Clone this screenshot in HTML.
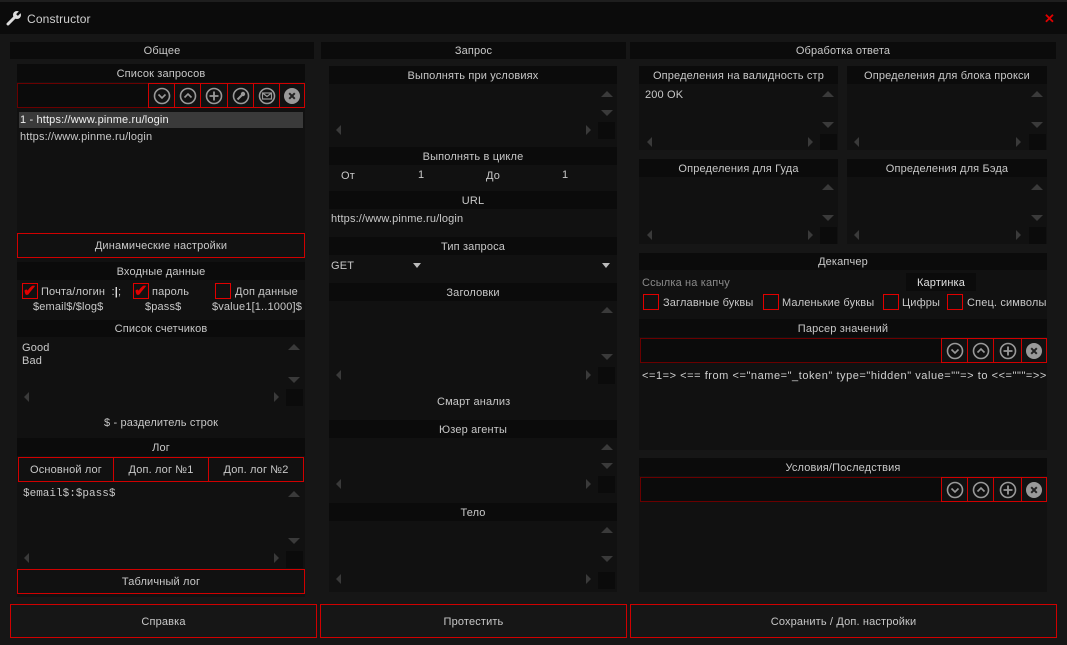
<!DOCTYPE html>
<html><head><meta charset="utf-8"><style>
*{margin:0;padding:0;box-sizing:border-box}
body{width:1067px;height:645px;background:#161616;font-family:"Liberation Sans",sans-serif;font-size:11px;letter-spacing:0.15px;color:#c8c8c8;position:relative;overflow:hidden}
div,span{position:absolute}
.h{background:#0b0b0b;text-align:center;height:18px;line-height:20px;color:#c8c8c8}
.p{background:#111}
.rb{border:1px solid #d00000;text-align:center;color:#c8c8c8}
.db{border:1px solid #6a0000}
.t{white-space:nowrap;margin-top:1px}
.cb{width:16px;height:16px;border:1px solid #e00000}
.corner{width:17px;height:17px;background:#0b0b0b}
.up{width:0;height:0;border-left:6px solid transparent;border-right:6px solid transparent;border-bottom:6px solid #3a3a3a}
.dn{width:0;height:0;border-left:6px solid transparent;border-right:6px solid transparent;border-top:6px solid #3a3a3a}
.lf{width:0;height:0;border-top:5px solid transparent;border-bottom:5px solid transparent;border-right:5px solid #3a3a3a}
.rt{width:0;height:0;border-top:5px solid transparent;border-bottom:5px solid transparent;border-left:5px solid #3a3a3a}
.btn{border:1px solid #d00000;height:25px}
.btn svg{position:absolute;left:50%;top:50%;margin:-9px 0 0 -9px}
</style></head><body>
<div style="left:0;top:0;width:1067px;height:34px;background:#0b0b0b"></div>
<div style="left:0;top:0;width:1067px;height:2px;background:#1e1e1e"></div>
<svg style="position:absolute;left:6px;top:10px" width="16" height="16" viewBox="0 0 16 16"><path d="M2 14 L9 7" stroke="#ddd" stroke-width="3" stroke-linecap="round"/><circle cx="11" cy="5" r="4" fill="#ddd"/><path d="M11 5 L15 1" stroke="#0b0b0b" stroke-width="2.5"/></svg>
<div class="t" style="left:27px;top:11px;font-size:12px;color:#d0d0d0">Constructor</div>
<div class="t" style="left:1044px;top:10px;color:#e00000;font-size:13px;font-weight:bold">✕</div>

<!-- LEFT -->
<div class="h" style="left:10px;top:42px;width:304px;height:17px;line-height:19px">Общее</div>
<div class="p" style="left:17px;top:64px;width:288px;height:533px"></div>
<div class="h" style="left:17px;top:64px;width:288px">Список запросов</div>
<div class="db" style="left:17px;top:83px;width:132px;height:25px;background:#0b0b0b"></div>
<div style="left:19px;top:112px;width:284px;height:16px;background:#3a3a3a"></div>
<div class="t" style="left:20px;top:113px;color:#f0f0f0">1 - https://www.pinme.ru/login</div>
<div class="t" style="left:20px;top:130px">https://www.pinme.ru/login</div>
<div class="rb" style="left:17px;top:233px;width:288px;height:25px;line-height:25px">Динамические настройки</div>
<div class="h" style="left:17px;top:262px;width:288px">Входные данные</div>
<div class="cb" style="left:22px;top:283px"></div><div class="t" style="left:23px;top:280px;color:#e00000;font-size:16px;font-weight:bold">✔</div>
<div class="t" style="left:41px;top:285px">Почта/логин &nbsp;:<b style="color:#ddd">|</b>;</div>
<div class="cb" style="left:133px;top:283px"></div><div class="t" style="left:134px;top:280px;color:#e00000;font-size:16px;font-weight:bold">✔</div>
<div class="t" style="left:152px;top:285px">пароль</div>
<div class="cb" style="left:215px;top:283px"></div>
<div class="t" style="left:235px;top:285px">Доп данные</div>
<div class="t" style="left:33px;top:300px">$email$/$log$</div>
<div class="t" style="left:145px;top:300px">$pass$</div>
<div class="t" style="left:212px;top:300px">$value1[1..1000]$</div>
<div class="h" style="left:17px;top:320px;width:288px;height:17px;line-height:19px">Список счетчиков</div>
<div class="t" style="left:22px;top:341px;line-height:13px">Good<br>Bad</div>
<div class="up" style="left:288px;top:344px"></div><div class="dn" style="left:288px;top:377px"></div>
<div class="lf" style="left:24px;top:392px"></div><div class="rt" style="left:274px;top:392px"></div>
<div class="corner" style="left:286px;top:389px"></div>
<div class="t" style="left:104px;top:416px">$ - разделитель строк</div>
<div class="h" style="left:17px;top:438px;width:288px">Лог</div>
<div class="rb" style="left:18px;top:457px;width:96px;height:25px;line-height:25px">Основной лог</div>
<div class="rb" style="left:113px;top:457px;width:96px;height:25px;line-height:25px">Доп. лог №1</div>
<div class="rb" style="left:208px;top:457px;width:96px;height:25px;line-height:25px">Доп. лог №2</div>
<div class="t" style="left:23px;top:487px;font-family:'Liberation Mono',monospace;font-size:11px;letter-spacing:0">$email$:$pass$</div>
<div class="up" style="left:288px;top:491px"></div><div class="dn" style="left:288px;top:538px"></div>
<div class="lf" style="left:24px;top:553px"></div><div class="rt" style="left:274px;top:553px"></div>
<div class="corner" style="left:286px;top:551px"></div>
<div class="rb" style="left:17px;top:569px;width:288px;height:25px;line-height:25px">Табличный лог</div>

<!-- MIDDLE -->
<div class="h" style="left:321px;top:42px;width:305px;height:17px;line-height:19px">Запрос</div>
<div class="p" style="left:329px;top:66px;width:288px;height:526px"></div>
<div class="h" style="left:329px;top:66px;width:288px">Выполнять при условиях</div>
<div class="up" style="left:601px;top:91px"></div><div class="dn" style="left:601px;top:110px"></div>
<div class="lf" style="left:336px;top:125px"></div><div class="rt" style="left:586px;top:125px"></div>
<div class="corner" style="left:598px;top:122px"></div>
<div class="h" style="left:329px;top:147px;width:288px">Выполнять в цикле</div>
<div class="t" style="left:341px;top:169px">От</div><div class="t" style="left:418px;top:168px">1</div>
<div class="t" style="left:486px;top:169px">До</div><div class="t" style="left:562px;top:168px">1</div>
<div class="h" style="left:329px;top:191px;width:288px">URL</div>
<div class="t" style="left:331px;top:212px">https://www.pinme.ru/login</div>
<div class="h" style="left:329px;top:237px;width:288px">Тип запроса</div>
<div class="t" style="left:331px;top:259px">GET</div>
<div class="dn" style="left:602px;top:263px;border-width:5px 4px 0 4px;border-top-color:#bbb"></div>
<div class="dn" style="left:413px;top:263px;border-width:5px 4px 0 4px;border-top-color:#bbb"></div>
<div class="h" style="left:329px;top:283px;width:288px">Заголовки</div>
<div class="up" style="left:601px;top:307px"></div><div class="dn" style="left:601px;top:354px"></div>
<div class="lf" style="left:336px;top:370px"></div><div class="rt" style="left:586px;top:370px"></div>
<div class="corner" style="left:598px;top:367px"></div>
<div class="t" style="left:437px;top:395px">Смарт анализ</div>
<div class="h" style="left:329px;top:420px;width:288px">Юзер агенты</div>
<div class="up" style="left:601px;top:444px"></div><div class="dn" style="left:601px;top:463px"></div>
<div class="lf" style="left:336px;top:479px"></div><div class="rt" style="left:586px;top:479px"></div>
<div class="corner" style="left:598px;top:476px"></div>
<div class="h" style="left:329px;top:503px;width:288px">Тело</div>
<div class="up" style="left:601px;top:527px"></div><div class="dn" style="left:601px;top:556px"></div>
<div class="lf" style="left:336px;top:574px"></div><div class="rt" style="left:586px;top:574px"></div>
<div class="corner" style="left:598px;top:572px"></div>

<!-- RIGHT -->
<div class="h" style="left:630px;top:42px;width:426px;height:17px;line-height:19px">Обработка ответа</div>
<div class="p" style="left:639px;top:66px;width:408px;height:526px"></div>
<div class="h" style="left:639px;top:66px;width:199px">Определения на валидность стр</div>
<div class="h" style="left:847px;top:66px;width:200px">Определения для блока прокси</div>
<div class="t" style="left:645px;top:88px">200 OK</div>
<div class="up" style="left:822px;top:91px"></div><div class="dn" style="left:822px;top:122px"></div>
<div class="lf" style="left:647px;top:137px"></div><div class="rt" style="left:808px;top:137px"></div>
<div class="corner" style="left:820px;top:134px"></div>
<div class="up" style="left:1031px;top:91px"></div><div class="dn" style="left:1031px;top:122px"></div>
<div class="lf" style="left:854px;top:137px"></div><div class="rt" style="left:1016px;top:137px"></div>
<div class="corner" style="left:1029px;top:134px"></div>
<div class="h" style="left:639px;top:159px;width:199px">Определения для Гуда</div>
<div class="h" style="left:847px;top:159px;width:200px">Определения для Бэда</div>
<div class="up" style="left:822px;top:184px"></div><div class="dn" style="left:822px;top:215px"></div>
<div class="lf" style="left:647px;top:230px"></div><div class="rt" style="left:808px;top:230px"></div>
<div class="corner" style="left:820px;top:227px"></div>
<div class="up" style="left:1031px;top:184px"></div><div class="dn" style="left:1031px;top:215px"></div>
<div class="lf" style="left:854px;top:230px"></div><div class="rt" style="left:1016px;top:230px"></div>
<div class="corner" style="left:1029px;top:227px"></div>
<div style="left:838px;top:66px;width:9px;height:187px;background:#161616"></div>
<div style="left:639px;top:150px;width:408px;height:9px;background:#161616"></div>
<div style="left:639px;top:244px;width:408px;height:9px;background:#161616"></div>
<div class="h" style="left:639px;top:253px;width:408px;height:17px;line-height:19px">Декапчер</div>
<div class="t" style="left:642px;top:276px;color:#8a8a8a">Ссылка на капчу</div>
<div class="h" style="left:906px;top:273px;width:70px;color:#e0e0e0">Картинка</div>
<div class="cb" style="left:643px;top:294px"></div><div class="t" style="left:663px;top:296px">Заглавные буквы</div>
<div class="cb" style="left:763px;top:294px"></div><div class="t" style="left:782px;top:296px">Маленькие буквы</div>
<div class="cb" style="left:883px;top:294px"></div><div class="t" style="left:902px;top:296px">Цифры</div>
<div class="cb" style="left:947px;top:294px"></div><div class="t" style="left:967px;top:296px">Спец. символы</div>
<div class="h" style="left:639px;top:319px;width:408px">Парсер значений</div>
<div class="db" style="left:640px;top:338px;width:302px;height:25px;background:#0b0b0b"></div>
<div class="t" style="left:642px;top:369px;width:404px;overflow:hidden;color:#d0d0d0;letter-spacing:0.55px">&lt;=1=&gt; &lt;== from &lt;="name="_token" type="hidden" value=""=&gt; to &lt;&lt;="""=&gt;&gt; :</div>
<div style="left:639px;top:450px;width:408px;height:8px;background:#161616"></div>
<div class="h" style="left:639px;top:458px;width:408px">Условия/Последствия</div>
<div class="db" style="left:640px;top:477px;width:302px;height:25px;background:#0b0b0b"></div>

<!-- toolbar buttons -->
<div class="btn" style="left:148px;top:83px;width:27px"><svg width="18" height="18"><circle cx="9" cy="9" r="7.5" fill="none" stroke="#999" stroke-width="1.6"/><path d="M5.5 7.5 L9 11 L12.5 7.5" fill="none" stroke="#999" stroke-width="1.6"/></svg></div>
<div class="btn" style="left:174px;top:83px;width:27px"><svg width="18" height="18"><circle cx="9" cy="9" r="7.5" fill="none" stroke="#999" stroke-width="1.6"/><path d="M5.5 10.5 L9 7 L12.5 10.5" fill="none" stroke="#999" stroke-width="1.6"/></svg></div>
<div class="btn" style="left:200px;top:83px;width:28px"><svg width="18" height="18"><circle cx="9" cy="9" r="7.5" fill="none" stroke="#999" stroke-width="1.6"/><path d="M9 4.5 V13.5 M4.5 9 H13.5" stroke="#999" stroke-width="1.8"/></svg></div>
<div class="btn" style="left:227px;top:83px;width:27px"><svg width="18" height="18"><circle cx="9" cy="9" r="7.5" fill="none" stroke="#999" stroke-width="1.6"/><path d="M5.5 12.5 L10 8" stroke="#999" stroke-width="2"/><circle cx="11" cy="7" r="2.2" fill="#999"/></svg></div>
<div class="btn" style="left:253px;top:83px;width:27px"><svg width="18" height="18"><circle cx="9" cy="9" r="7.5" fill="none" stroke="#999" stroke-width="1.6"/><rect x="4.5" y="6" width="9" height="6" fill="none" stroke="#999" stroke-width="1.2"/><path d="M4.5 6 L9 9.5 L13.5 6" fill="none" stroke="#999" stroke-width="1.2"/></svg></div>
<div class="btn" style="left:279px;top:83px;width:26px"><svg width="18" height="18"><circle cx="9" cy="9" r="8" fill="#999"/><path d="M6.2 6.2 L11.8 11.8 M11.8 6.2 L6.2 11.8" stroke="#222" stroke-width="2"/></svg></div>

<div class="btn" style="left:941px;top:338px;width:27px"><svg width="18" height="18"><circle cx="9" cy="9" r="7.5" fill="none" stroke="#999" stroke-width="1.6"/><path d="M5.5 7.5 L9 11 L12.5 7.5" fill="none" stroke="#999" stroke-width="1.6"/></svg></div>
<div class="btn" style="left:967px;top:338px;width:27px"><svg width="18" height="18"><circle cx="9" cy="9" r="7.5" fill="none" stroke="#999" stroke-width="1.6"/><path d="M5.5 10.5 L9 7 L12.5 10.5" fill="none" stroke="#999" stroke-width="1.6"/></svg></div>
<div class="btn" style="left:993px;top:338px;width:29px"><svg width="18" height="18"><circle cx="9" cy="9" r="7.5" fill="none" stroke="#999" stroke-width="1.6"/><path d="M9 4.5 V13.5 M4.5 9 H13.5" stroke="#999" stroke-width="1.8"/></svg></div>
<div class="btn" style="left:1021px;top:338px;width:26px"><svg width="18" height="18"><circle cx="9" cy="9" r="8" fill="#999"/><path d="M6.2 6.2 L11.8 11.8 M11.8 6.2 L6.2 11.8" stroke="#222" stroke-width="2"/></svg></div>

<div class="btn" style="left:941px;top:477px;width:27px"><svg width="18" height="18"><circle cx="9" cy="9" r="7.5" fill="none" stroke="#999" stroke-width="1.6"/><path d="M5.5 7.5 L9 11 L12.5 7.5" fill="none" stroke="#999" stroke-width="1.6"/></svg></div>
<div class="btn" style="left:967px;top:477px;width:27px"><svg width="18" height="18"><circle cx="9" cy="9" r="7.5" fill="none" stroke="#999" stroke-width="1.6"/><path d="M5.5 10.5 L9 7 L12.5 10.5" fill="none" stroke="#999" stroke-width="1.6"/></svg></div>
<div class="btn" style="left:993px;top:477px;width:29px"><svg width="18" height="18"><circle cx="9" cy="9" r="7.5" fill="none" stroke="#999" stroke-width="1.6"/><path d="M9 4.5 V13.5 M4.5 9 H13.5" stroke="#999" stroke-width="1.8"/></svg></div>
<div class="btn" style="left:1021px;top:477px;width:26px"><svg width="18" height="18"><circle cx="9" cy="9" r="8" fill="#999"/><path d="M6.2 6.2 L11.8 11.8 M11.8 6.2 L6.2 11.8" stroke="#222" stroke-width="2"/></svg></div>

<!-- bottom buttons -->
<div class="rb" style="left:10px;top:604px;width:307px;height:34px;line-height:34px">Справка</div>
<div class="rb" style="left:320px;top:604px;width:307px;height:34px;line-height:34px">Протестить</div>
<div class="rb" style="left:630px;top:604px;width:427px;height:34px;line-height:34px">Сохранить / Доп. настройки</div>
</body></html>
